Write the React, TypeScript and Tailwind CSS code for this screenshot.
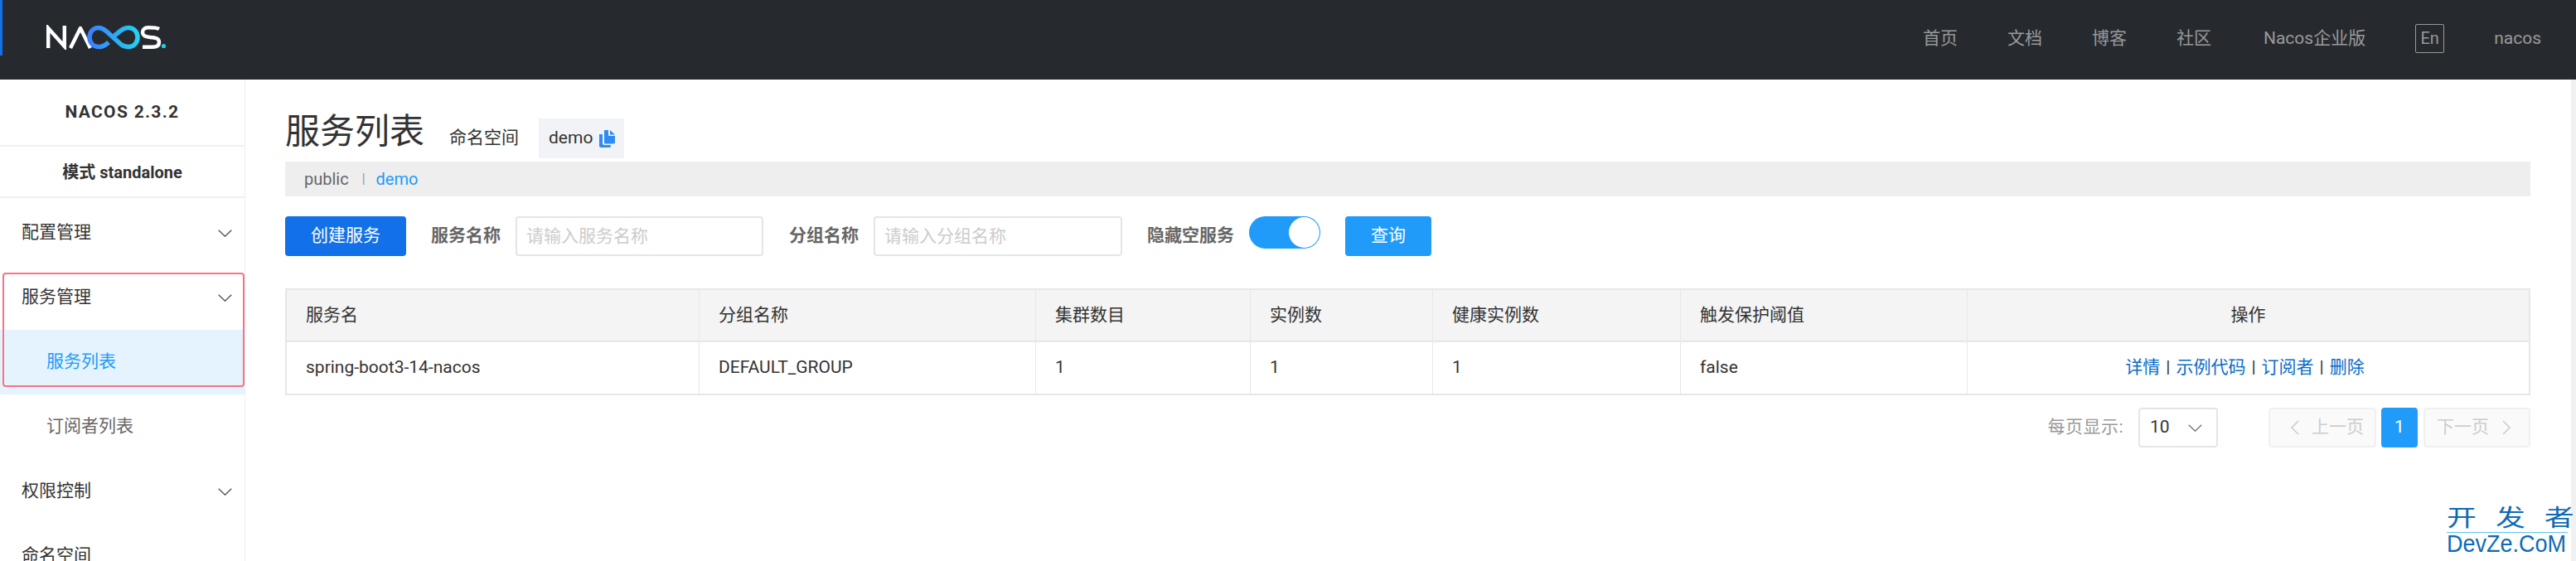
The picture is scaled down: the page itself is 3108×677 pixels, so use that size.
import React from "react";

function Chevron({ className = "" }: { className?: string }) {
  return (
    <svg viewBox="0 0 17 9" width="17" height="9" className={className} fill="none" stroke="currentColor" strokeWidth="1.4">
      <path d="M0.7 0.7 L8.5 8.2 L16.3 0.7" />
    </svg>
  );
}

function Logo() {
  return (
    <svg width="146" height="30" viewBox="0 0 146 30" fill="none">
      <defs>
        <linearGradient id="nacosg" x1="55" x2="118" y1="0" y2="0" gradientUnits="userSpaceOnUse">
          <stop offset="0" stopColor="#3b82fb" />
          <stop offset="1" stopColor="#1cdcf0" />
        </linearGradient>
      </defs>
      <path d="M2.200 28 V4 L21.800 26 V1" stroke="#fff" strokeWidth="4.400" />
      <path d="M29 28 L41 4 L53 28" stroke="#fff" strokeWidth="4.400" strokeLinejoin="round" />
      <path
        d="M75 21 C71 25 67 26.500 63 26.500 C56 26.500 52 21 52 15 C52 8 57 3.500 63 3.500 C68 3.500 72 7 76 11 L86 20 C90 24 93 26.500 99 26.500 C106 26.500 110 21 110 15 C110 8 105 3.500 99 3.500 C94 3.500 90 6 86 10 L82 13"
        stroke="url(#nacosg)"
        strokeWidth="5.500"
      />
      <path d="M136 5 C133 3.200 128 3.200 123 3.200 C118 3.200 116 6 116 9 C116 13 119 14.500 125 15 C131 15.500 136 16 136 21 C136 25 133 26.800 128 26.800 H116" stroke="#fff" strokeWidth="4.400" />
      <circle cx="141.500" cy="25.500" r="2.600" fill="#1cd0ee" />
    </svg>
  );
}

function CopyIcon() {
  return (
    <svg width="19" height="21" viewBox="0 0 19 21" className="ml-[8px]">
      <path d="M0 5 H4 V16 Q4 18 6 18 H14 V19 Q14 21 12 21 H2 Q0 21 0 19 Z" fill="#2f8cf5" />
      <path d="M6 0 H11 V6 Q11 7 12 7 H19 V15 Q19 16.500 17 16.500 H7.500 Q6 16.500 6 15 Z" fill="#2f8cf5" />
      <path d="M13 0 L19 5.500 H13 Z" fill="#2f8cf5" />
    </svg>
  );
}

function MenuItem({ label, sub, active, chevron }: { label: string; sub?: boolean; active?: boolean; chevron?: boolean }) {
  return (
    <div
      className={`h-[78px] shrink-0 flex items-center justify-between pr-[15px] text-[21px] ${sub ? "pl-[56px]" : "pl-[26px]"} ${
        active ? "bg-[#e4f3fe] text-[#209bfa]" : sub ? "text-[#666666]" : "text-[#333333]"
      }`}
    >
      <span>{label}</span>
      {chevron && <Chevron className="text-[#555555]" />}
    </div>
  );
}

const columns = ["服务名", "分组名称", "集群数目", "实例数", "健康实例数", "触发保护阈值"];
const cells = ["spring-boot3-14-nacos", "DEFAULT_GROUP", "1", "1", "1", "false"];

export default function App() {
  return (
    <div
      className="relative w-[3108px] h-[677px] overflow-hidden bg-white flex flex-col text-[#333333]"
      style={{ fontFamily: 'Roboto, "Noto Sans CJK SC", sans-serif' }}
    >
      <header className="relative h-[96px] shrink-0 bg-[#262a2f] flex items-center pl-[56px] pr-[42px] text-[21px] text-[#999999]">
        <div className="absolute left-0 top-0 w-[3px] h-[67px] bg-[#1271e8]" />
        <div className="-mt-[7px]">
          <Logo />
        </div>
        <nav className="ml-auto flex items-center gap-[60px] -mt-[3px]">
          <span>首页</span>
          <span>文档</span>
          <span>博客</span>
          <span>社区</span>
          <span className="ml-[3px]">Nacos企业版</span>
          <span className="w-[35px] h-[35px] border border-[#999999] rounded-[2px] flex items-center justify-center text-[20px] pb-[2px]">En</span>
          <span>nacos</span>
        </nav>
      </header>

      <div className="flex flex-1 min-h-0">
        <aside className="relative w-[296px] shrink-0 border-r border-[#eeeeee] flex flex-col overflow-hidden">
          <div className="h-[81px] shrink-0 flex items-center justify-center border-b-2 border-[#f0f0f0] font-bold text-[21px] tracking-[1.3px]">
            NACOS 2.3.2
          </div>
          <div className="h-[62px] shrink-0 flex items-center justify-center border-b-2 border-[#f0f0f0] font-bold text-[20px] pt-[2px]">
            模式 standalone
          </div>
          <div className="h-[3px] shrink-0" />
          <MenuItem label="配置管理" chevron />
          <MenuItem label="服务管理" chevron />
          <MenuItem label="服务列表" sub active />
          <MenuItem label="订阅者列表" sub />
          <MenuItem label="权限控制" chevron />
          <MenuItem label="命名空间" />
          <div className="absolute left-[3px] top-[233px] w-[292px] h-[138px] border-2 border-[#fb7284] rounded-[4px]" />
        </aside>

        <main className="flex-1 min-w-0 pl-[48px] pr-[49px] pt-[47px]">
          <div className="flex items-start h-[48px]">
            <h1 className="text-[42px] leading-[32px] font-normal">服务列表</h1>
            <span className="ml-[30px] h-[48px] flex items-center text-[21px]">命名空间</span>
            <div className="ml-[24px] w-[103px] h-[48px] bg-[#f2f3f7] flex items-center pl-[12px] text-[21px]">
              demo
              <CopyIcon />
            </div>
          </div>

          <div className="mt-[4px] h-[42px] bg-[#eeeeee] flex items-center pl-[23px] text-[20px] text-[#666666]">
            <span>public</span>
            <span className="ml-[16px] text-[16px] text-[#999999]">|</span>
            <span className="ml-[13px] text-[#209bfa]">demo</span>
          </div>

          <div className="mt-[24px] h-[48px] flex items-start text-[21px]">
            <button className="w-[146px] h-[48px] bg-[#1271e8] text-white rounded-[4px]">创建服务</button>
            <label className="ml-[30px] h-[48px] flex items-center font-bold text-[#666666]">服务名称</label>
            <input
              placeholder="请输入服务名称"
              className="ml-[18px] w-[299px] h-[48px] border-2 border-[#e4e5e9] rounded-[4px] pl-[11px] outline-none placeholder:text-[#cccccc]"
            />
            <label className="ml-[31px] h-[48px] flex items-center font-bold text-[#666666]">分组名称</label>
            <input
              placeholder="请输入分组名称"
              className="ml-[18px] w-[300px] h-[48px] border-2 border-[#e4e5e9] rounded-[4px] pl-[11px] outline-none placeholder:text-[#cccccc]"
            />
            <label className="ml-[30px] h-[48px] flex items-center font-bold text-[#666666]">隐藏空服务</label>
            <div className="ml-[18px] w-[86px] h-[39px] rounded-full bg-[#209bfa] flex items-center justify-end pr-[1px]">
              <div className="w-[37px] h-[37px] rounded-full bg-white" />
            </div>
            <button className="ml-[30px] w-[104px] h-[48px] bg-[#209bfa] text-white rounded-[4px]">查询</button>
          </div>

          <div className="mt-[39px] border-2 border-[#e6e7eb] text-[21px]">
            <div className="grid grid-cols-[498px_406px_259px_220px_299px_346px_1fr] h-[63px] bg-[#f4f4f4] border-b-2 border-[#e6e7eb]">
              {columns.map((c) => (
                <div key={c} className="flex items-center pl-[23px] border-r border-[#e6e7eb]">
                  {c}
                </div>
              ))}
              <div className="flex items-center justify-center">操作</div>
            </div>
            <div className="grid grid-cols-[498px_406px_259px_220px_299px_346px_1fr] h-[62px]">
              {cells.map((c, i) => (
                <div key={i} className="flex items-center pl-[23px] border-r border-[#e6e7eb]">
                  {c}
                </div>
              ))}
              <div className="flex items-center justify-center text-[#0a6cc9] pr-[8px]">
                <span>详情</span>
                <span className="text-[#333333] mx-[7px]">|</span>
                <span>示例代码</span>
                <span className="text-[#333333] mx-[7px]">|</span>
                <span>订阅者</span>
                <span className="text-[#333333] mx-[7px]">|</span>
                <span>删除</span>
              </div>
            </div>
          </div>

          <div className="mt-[15px] h-[48px] flex items-center justify-end text-[21px]">
            <span className="text-[#999999] tracking-[0.5px]">每页显示:</span>
            <div className="ml-[18px] w-[96px] h-[48px] border-2 border-[#e4e5e9] rounded-[4px] flex items-center justify-between pl-[12px] pr-[17px]">
              <span>10</span>
              <Chevron className="text-[#777777]" />
            </div>
            <div className="ml-[61px] w-[130px] h-[48px] bg-[#fafafa] border-2 border-[#f0f0f0] rounded-[4px] flex items-center pl-[24px] text-[#cccccc]">
              <svg width="11" height="18" viewBox="0 0 11 18" fill="none" stroke="currentColor" strokeWidth="1.600"><path d="M10 1 L2 9 L10 17" /></svg>
              <span className="ml-[15px]">上一页</span>
            </div>
            <div className="ml-[6px] w-[44px] h-[48px] bg-[#209bfa] rounded-[4px] text-white flex items-center justify-center">1</div>
            <div className="ml-[7px] w-[129px] h-[48px] bg-[#fafafa] border-2 border-[#f0f0f0] rounded-[4px] flex items-center pl-[14px] text-[#cccccc]">
              <span>下一页</span>
              <svg className="ml-[16px]" width="11" height="18" viewBox="0 0 11 18" fill="none" stroke="currentColor" strokeWidth="1.600"><path d="M1 1 L9 9 L1 17" /></svg>
            </div>
          </div>
        </main>

        <div className="w-[6px] shrink-0 bg-[#f1f1f1]" />
      </div>

      <div className="absolute left-[2952px] top-[610px] w-[146px] text-[#0f6ab4]">
        <div className="relative h-[32px] flex gap-[18px] text-[28px] leading-[32px] origin-left scale-x-[1.28] w-[114px]">
          <span>开</span>
          <span>发</span>
          <span>者</span>
        </div>
        <div className="h-[1px] bg-[#5ec5ee]" />
        <div className="text-[30px] leading-[26px] whitespace-nowrap origin-left scale-x-[0.9]" style={{ fontFamily: '"Liberation Sans", sans-serif' }}>
          DevZe.CoM
        </div>
      </div>
    </div>
  );
}
